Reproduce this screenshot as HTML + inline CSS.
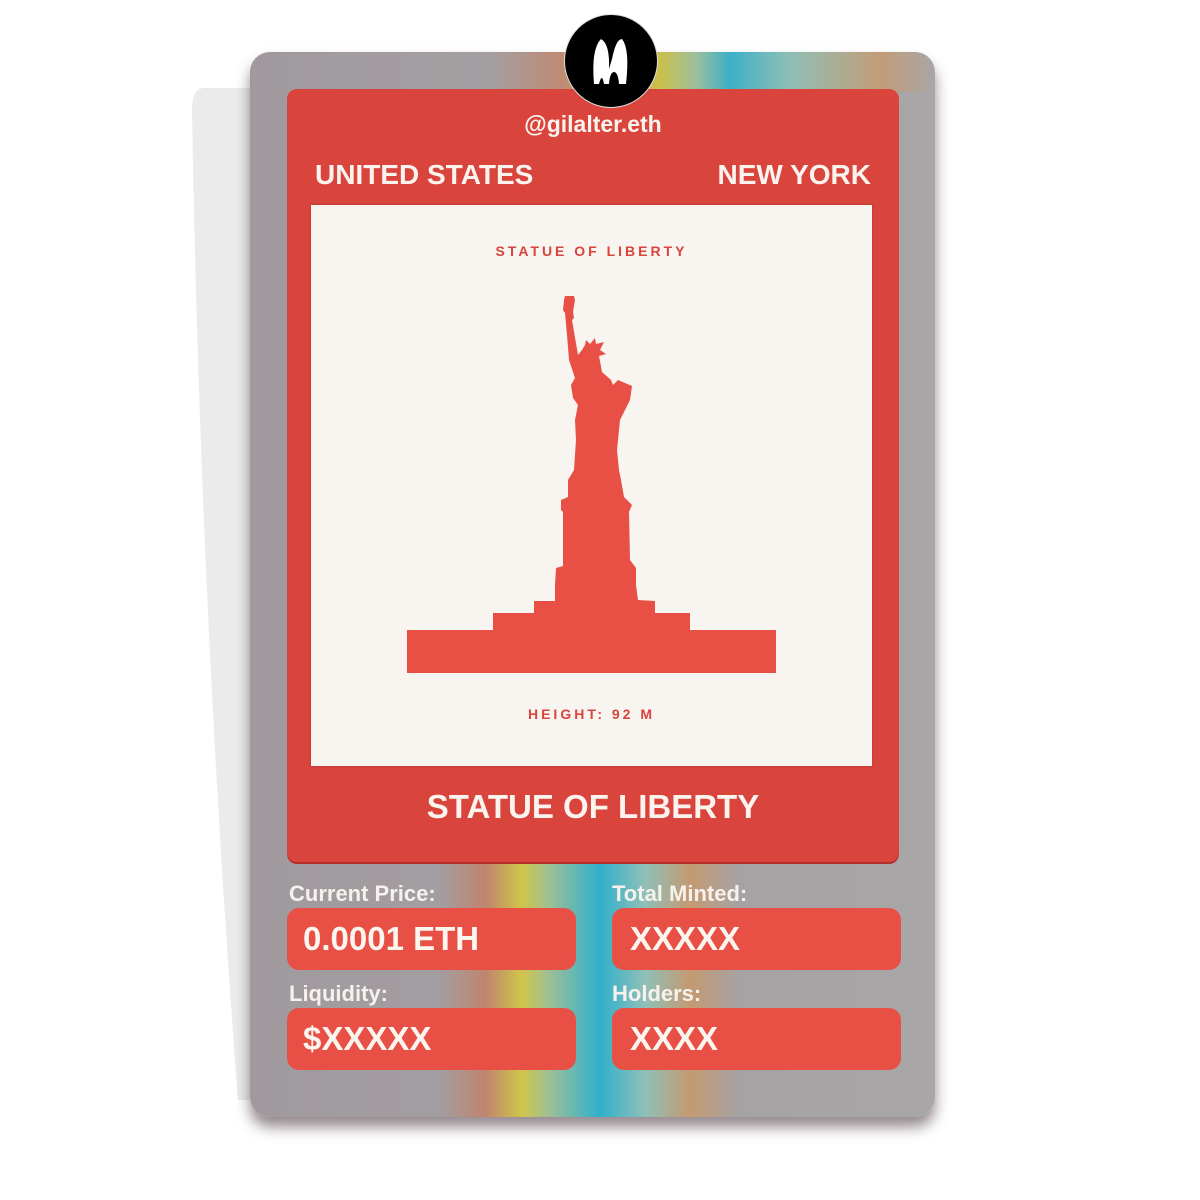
<!DOCTYPE html>
<html><head><style>
body{margin:0;width:1200px;height:1200px;background:#fff;position:relative;overflow:hidden;font-family:"Liberation Sans",sans-serif}
.ab{position:absolute}
.card{left:250px;top:52px;width:685px;height:1065px;border-radius:20px;background:linear-gradient(90deg,#a09a9e,#a8a6a7);box-shadow:0 10px 14px rgba(60,40,50,.55);overflow:hidden}
.rb{position:absolute;left:0;width:685px}
.lbl{color:#f6f1ec;font-size:22px;font-weight:bold}
.box{background:#e85046;border-radius:12px;width:289px;height:62px;color:#fbf5ef;font-size:33px;font-weight:bold;line-height:62px;box-sizing:border-box;padding-left:16px}
</style></head><body>
<svg class="ab" style="left:0;top:0" width="1200" height="1200"><path d="M204 88 L250 88 L250 1100 L238 1100 Q200 600 192 110 Q192 88 204 88Z" fill="#ebebeb"/></svg>
<div class="ab card">
 <div class="rb" style="top:0;height:40px;background:linear-gradient(90deg,rgba(0,0,0,0) 240px,#bf8a74 310px,#c9c04a 410px,#9fbf9a 445px,#3cb0c8 480px,#8fbfb6 540px,#c39c78 630px,rgba(0,0,0,0) 685px)"></div>
 <div class="rb" style="top:810px;height:255px;background:linear-gradient(90deg,rgba(0,0,0,0) 190px,#bf846f 235px,#d0c54a 272px,#9cbf98 300px,#2fb0cc 350px,#8fc0b8 395px,#c49a72 440px,rgba(0,0,0,0) 490px)"></div>
</div>
<div class="ab" style="left:287px;top:89px;width:612px;height:773px;background:#d9443d;border-radius:10px;box-shadow:0 2px 0 #b52f2a"></div>
<div class="ab" style="left:311px;top:205px;width:561px;height:561px;background:#f8f4ef;box-shadow:0 0 2px #a33"></div>
<div class="ab" style="left:564px;top:14px;width:92px;height:92px;border-radius:50%;background:#000;border:1px solid #ddd"></div>
<svg class="ab" style="left:564px;top:14px" width="92" height="92"><path d="M30 70 Q27 35 37 25 Q46 30 45 55 L48 45 Q52 25 58 25 Q66 35 62 70 L55 70 Q54 58 50 58 Q46 58 45 70 L40 70 Q38 58 35 70Z" fill="#fff"/></svg>
<div class="ab" style="left:0;width:1186px;top:111px;text-align:center;color:#fbf4ee;font-size:23px;font-weight:bold">@gilalter.eth</div>
<div class="ab" style="left:315px;top:159px;color:#fbf4ee;font-size:28px;font-weight:bold">UNITED STATES</div>
<div class="ab" style="right:329px;top:159px;color:#fbf4ee;font-size:28px;font-weight:bold">NEW YORK</div>
<div class="ab" style="left:311px;width:561px;top:243px;text-align:center;color:#d9443d;font-size:14px;font-weight:bold;letter-spacing:3px">STATUE OF LIBERTY</div>
<div class="ab" style="left:311px;width:561px;top:706px;text-align:center;color:#d9443d;font-size:14px;font-weight:bold;letter-spacing:3px">HEIGHT: 92 M</div>
<svg class="ab" style="left:0;top:0" width="1200" height="1200"><path fill="#e85046" d="M407 673 L407 630 L493 630 L493 613 L534 613 L534 601 L555 601 L555 585 L556 568 L563 566 L563 512 L561 510 L561 500 L568 497 L568 480 L574 470 L576 440 L575 420 L578 405 L573 398 L571 385 L575 378 L569 360 L567 335 L565 313 L563 310 L564 300 L565 296 L574 296 L575 300 L573 312 L574 318 L572 320 L578 355 L582 350 L585 345 L586 340 L590 344 L595 338 L596 344 L604 342 L600 350 L606 354 L599 356 L602 372 L611 380 L613 385 L618 380 L632 386 L630 400 L625 410 L620 420 L617 450 L619 470 L621 480 L624 497 L632 505 L629 512 L630 560 L636 568 L636 585 L638 600 L655 601 L655 613 L690 613 L690 630 L776 630 L776 673Z"/></svg>
<div class="ab" style="left:0;width:1186px;top:788px;text-align:center;color:#fbf4ee;font-size:33px;font-weight:bold">STATUE OF LIBERTY</div>
<div class="ab lbl" style="left:289px;top:881px">Current Price:</div>
<div class="ab lbl" style="left:612px;top:881px">Total Minted:</div>
<div class="ab box" style="left:287px;top:908px">0.0001 ETH</div>
<div class="ab box" style="left:612px;top:908px;padding-left:18px">XXXXX</div>
<div class="ab lbl" style="left:289px;top:981px">Liquidity:</div>
<div class="ab lbl" style="left:612px;top:981px">Holders:</div>
<div class="ab box" style="left:287px;top:1008px">$XXXXX</div>
<div class="ab box" style="left:612px;top:1008px;padding-left:18px">XXXX</div>
</body></html>
